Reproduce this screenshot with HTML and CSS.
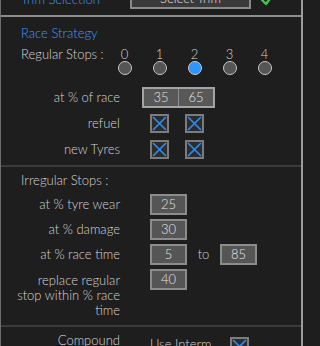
FILE: index.html
```html
<!DOCTYPE html>
<html>
<head>
<meta charset="utf-8">
<link rel="stylesheet" href="styles.css">
</head>
<body>
<div class="panel">
  <section class="trim">
    <span class="trim-label">Trim Selection</span>
    <button class="btn">Select Trim</button>
    <svg class="ok" width="12" height="12" viewBox="0 0 12 12"><path d="M1 5 L5 9 L11 1" fill="none" stroke="#3fc84a" stroke-width="2.4" stroke-linecap="round" stroke-linejoin="round"/></svg>
  </section>
  <div class="sep sep-light"></div>

  <section class="sec strategy">
    <h2 class="title">Race Strategy</h2>
    <div class="stops-row">
      <span class="stops-label">Regular Stops :</span>
      <div class="radios">
        <div class="radio-item"><span class="digit">0</span><span class="radio"></span></div>
        <div class="radio-item"><span class="digit">1</span><span class="radio"></span></div>
        <div class="radio-item"><span class="digit">2</span><span class="radio on"></span></div>
        <div class="radio-item"><span class="digit">3</span><span class="radio"></span></div>
        <div class="radio-item"><span class="digit">4</span><span class="radio"></span></div>
      </div>
    </div>
    <div class="row row-split">
      <span class="lbl">at % of race</span>
      <div class="split">
        <span class="split-cell">35</span>
        <span class="split-cell">65</span>
      </div>
    </div>
    <div class="row row-check">
      <span class="lbl">refuel</span>
      <div class="checks">
        <span class="cb"><svg viewBox="0 0 15 15"><path d="M1 1 L14 14 M14 1 L1 14"/></svg></span>
        <span class="cb"><svg viewBox="0 0 15 15"><path d="M1 1 L14 14 M14 1 L1 14"/></svg></span>
      </div>
    </div>
    <div class="row row-check row-check2">
      <span class="lbl">new Tyres</span>
      <div class="checks">
        <span class="cb"><svg viewBox="0 0 15 15"><path d="M1 1 L14 14 M14 1 L1 14"/></svg></span>
        <span class="cb"><svg viewBox="0 0 15 15"><path d="M1 1 L14 14 M14 1 L1 14"/></svg></span>
      </div>
    </div>
  </section>
  <div class="sep sep-dark"></div>

  <section class="sec irregular">
    <h2 class="subtitle">Irregular Stops :</h2>
    <div class="row row-box first">
      <span class="lbl">at % tyre wear</span>
      <span class="box">25</span>
    </div>
    <div class="row row-box">
      <span class="lbl">at % damage</span>
      <span class="box">30</span>
    </div>
    <div class="row row-box">
      <span class="lbl">at % race time</span>
      <span class="box">5</span>
      <span class="to">to</span>
      <span class="box box-2">85</span>
    </div>
    <div class="row row-box row-multi">
      <span class="lbl lbl-multi">replace regular<br>stop within % race<br>time</span>
      <span class="box">40</span>
    </div>
  </section>
  <div class="sep sep-dark"></div>

  <section class="sec compound">
    <div class="row row-compound">
      <span class="lbl lbl-compound">Compound<br>Selection</span>
      <span class="use">Use Interm.<br>Tyres</span>
      <span class="cb"><svg viewBox="0 0 15 15"><path d="M1 1 L14 14 M14 1 L1 14"/></svg></span>
    </div>
  </section>
</div>
</body>
</html>
```

FILE: styles.css
```css
* { box-sizing: border-box; }
html, body {
  margin: 0;
  padding: 0;
  background: #1e1e1e;
  overflow: hidden;
}
body {
  font-family: Lato, "Open Sans", sans-serif;
  font-weight: 300;
  font-size: 13px;
  line-height: 15px;
  color: #d4d4d4;
  width: 304px;
  height: 346px;
}
.panel {
  display: flow-root;
  width: 303px;
  min-height: 400px;
  border-left: 1px solid #6e6e6e;
  border-right: 2px solid #9c9c9c;
}

/* top trim row */
.trim {
  display: flex;
  align-items: center;
  height: 22px;
  margin-top: -13px;
}
.trim-label {
  color: #3a9bff;
  padding-left: 20px;
  width: 129px;
  flex: none;
  padding-top: 3px;
}
.btn {
  width: 121px;
  height: 22px;
  background: #3a3a3a;
  border: 2px solid #8a8a8a;
  color: #e0e0e0;
  font: inherit;
  padding: 0;
}
.ok {
  margin-left: 10px;
  margin-top: 6px;
}

.sep { height: 2px; }
.sep-light { background: #8c8c8c; margin-top: 6px; }
.sep-dark { background: #3b3b3b; }

.sec { padding-bottom: 6px; }
.strategy { padding-top: 9px; }
.title {
  margin: 0;
  font: inherit;
  color: #3a9bff;
  padding-left: 20px;
}
.subtitle {
  margin: 0;
  font: inherit;
  padding-left: 20px;
}

.stops-row {
  display: flex;
  align-items: flex-start;
  margin-top: 6px;
}
.stops-label {
  width: 106px;
  padding-left: 20px;
  flex: none;
}
.radios { display: flex; }
.radio-item {
  width: 35px;
  display: flex;
  flex-direction: column;
  align-items: center;
}
.digit { height: 15px; }
.radio {
  width: 14px;
  height: 14px;
  margin-top: -1px;
  border-radius: 50%;
  border: 1.5px solid #c6c6c6;
  background: #555;
}
.radio.on { background: #2e95ff; }

.row {
  display: flex;
  align-items: center;
}
.lbl {
  width: 119px;
  flex: none;
  text-align: right;
}
.row-split { margin-top: 12px; height: 21px; }
.split {
  margin-left: 22px;
  display: flex;
  border: 2px solid #a4a4a4;
  background: #585858;
  height: 21px;
}
.split-cell {
  width: 34px;
  text-align: center;
  color: #e4e4e4;
  line-height: 17px;
}
.split-cell + .split-cell { border-left: 1px solid #8e8e8e; width: 35px; }

.row-check { margin-top: 6px; height: 19px; }
.row-check2 { margin-top: 7px; }
.checks {
  margin-left: 30px;
  display: flex;
  gap: 16px;
}
.cb {
  display: block;
  width: 19px;
  height: 19px;
  border: 2px solid #7c7c7c;
  background: #2c2c2c;
  flex: none;
}
.cb svg {
  display: block;
  width: 15px;
  height: 15px;
}
.cb path {
  stroke: #2f8fef;
  stroke-width: 1.6;
  fill: none;
}

.irregular { padding-top: 6px; padding-bottom: 7px; }
.row-box { height: 21px; margin-top: 4px; }
.row-box.first { margin-top: 6px; }
.box {
  margin-left: 30px;
  width: 37px;
  height: 21px;
  border: 2px solid #8c8c8c;
  background: #555;
  color: #e4e4e4;
  text-align: center;
  line-height: 17px;
  flex: none;
}
.to {
  width: 33px;
  text-align: center;
}
.box-2 { margin-left: 0; }
.row-multi {
  height: auto;
  align-items: flex-start;
}
.lbl-multi {
  padding-top: 4px;
}

.compound { padding-top: 6px; }
.row-compound { align-items: flex-start; }
.use {
  margin-left: 30px;
  margin-top: 4px;
  width: 80px;
  flex: none;
}
.row-compound .cb { margin-top: 4px; }
```
